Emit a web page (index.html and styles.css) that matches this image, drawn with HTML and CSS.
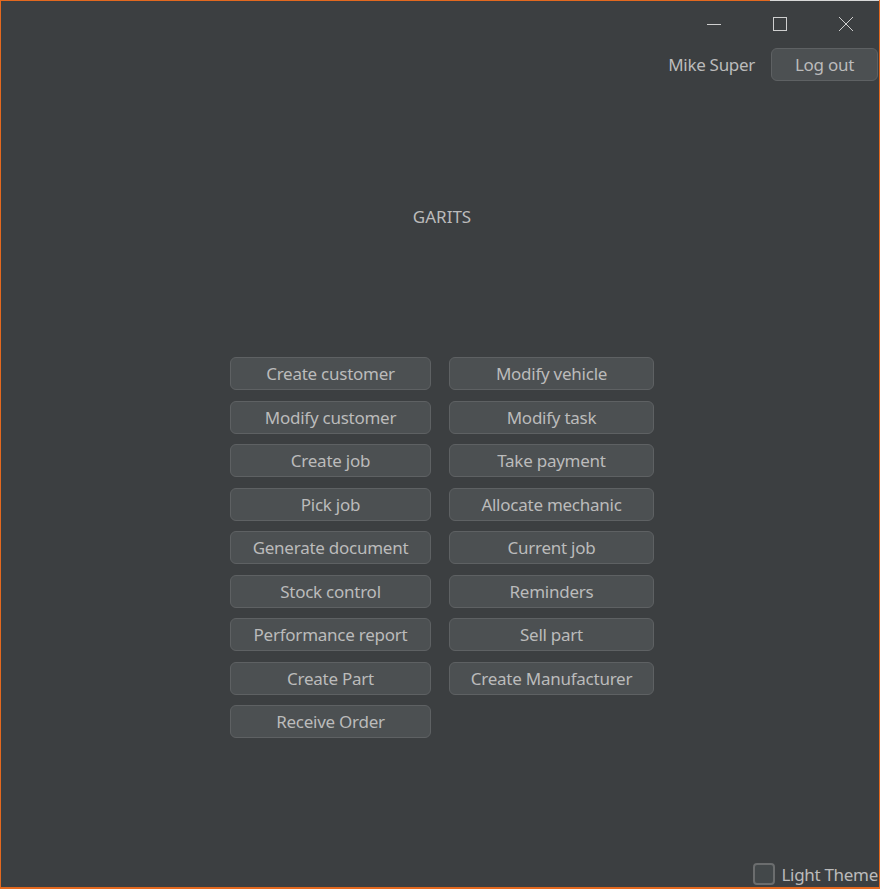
FILE: index.html
```html
<!DOCTYPE html>
<html>
<head>
<meta charset="utf-8">
<link rel="stylesheet" href="styles.css">
</head>
<body>
<div class="window">
  <div class="topline"></div>
  <div class="titlebar">
    <div class="ctrl"><svg width="16" height="16" viewBox="0 0 16 16"><line x1="1" y1="8.5" x2="15" y2="8.5" stroke="#cfcfcf" stroke-width="1"/></svg></div>
    <div class="ctrl"><svg width="16" height="16" viewBox="0 0 16 16"><rect x="1.5" y="1.5" width="13" height="13" fill="none" stroke="#cfcfcf" stroke-width="1"/></svg></div>
    <div class="ctrl"><svg width="16" height="16" viewBox="0 0 16 16"><path d="M1 1 L15 15 M15 1 L1 15" stroke="#cfcfcf" stroke-width="1"/></svg></div>
  </div>
  <div class="userbar">
    <span class="username">Mike Super</span>
    <button class="btn logout">Log out</button>
  </div>
  <div class="title">GARITS</div>
  <div class="menu">
    <button class="btn">Create customer</button>
    <button class="btn">Modify vehicle</button>
    <button class="btn">Modify customer</button>
    <button class="btn">Modify task</button>
    <button class="btn">Create job</button>
    <button class="btn">Take payment</button>
    <button class="btn">Pick job</button>
    <button class="btn">Allocate mechanic</button>
    <button class="btn">Generate document</button>
    <button class="btn">Current job</button>
    <button class="btn">Stock control</button>
    <button class="btn">Reminders</button>
    <button class="btn">Performance report</button>
    <button class="btn">Sell part</button>
    <button class="btn">Create Part</button>
    <button class="btn">Create Manufacturer</button>
    <button class="btn">Receive Order</button>
  </div>
  <div class="spacer"></div>
  <div class="footer">
    <label class="theme"><span class="box"></span><span>Light Theme</span></label>
  </div>
</div>
</body>
</html>
```
FILE: styles.css
```css
* { box-sizing: border-box; }
html, body { margin: 0; padding: 0; background: #3c3f41; }
body { font-family: "Noto Sans", "Open Sans", sans-serif; color: #bbbbbb; }
.window {
  position: relative;
  width: 880px;
  height: 889px;
  border: 1px solid #e4691f;
  border-bottom-width: 2px;
  background: #3c3f41;
  display: flex;
  flex-direction: column;
}
.topline {
  position: absolute;
  top: -1px;
  left: 769px;
  right: 0;
  height: 1px;
  background: #d8d8d8;
}
.titlebar {
  height: 45px;
  display: flex;
  justify-content: flex-end;
}
.ctrl {
  width: 66px;
  height: 45px;
  display: flex;
  align-items: center;
  justify-content: center;
}
.userbar {
  display: flex;
  justify-content: flex-end;
  align-items: center;
  margin-top: 2px;
  padding-right: 1px;
  gap: 16px;
}
.username { font-size: 17px; letter-spacing: -0.3px; }
.btn {
  font-family: "Noto Sans", "Open Sans", sans-serif;
  font-size: 17px;
  letter-spacing: -0.25px;
  color: #bbbbbb;
  background: #4c5052;
  border: 1px solid #5e6163;
  border-radius: 6px;
  height: 33px;
  padding: 0;
  line-height: 1;
}
.logout { width: 107px; }
.title {
  margin-top: 124px;
  padding-left: 4px;
  text-align: center;
  font-size: 17px;
  letter-spacing: 0px;
  line-height: 23px;
}
.menu {
  margin-top: 129px;
  align-self: center;
  margin-left: 4px;
  display: grid;
  grid-template-columns: 201px 205px;
  column-gap: 18px;
  row-gap: 10.5px;
}
.spacer { flex: 1; }
.footer {
  display: flex;
  justify-content: flex-end;
  padding-bottom: 1px;
  padding-right: 1px;
}
.theme {
  display: flex;
  align-items: center;
  gap: 6px;
  font-size: 17px;
  letter-spacing: -0.3px;
  height: 24px;
}
.box {
  width: 22px;
  height: 22px;
  border: 2px solid #6b6d6e;
  border-radius: 4px;
  background: #43484a;
}
```
